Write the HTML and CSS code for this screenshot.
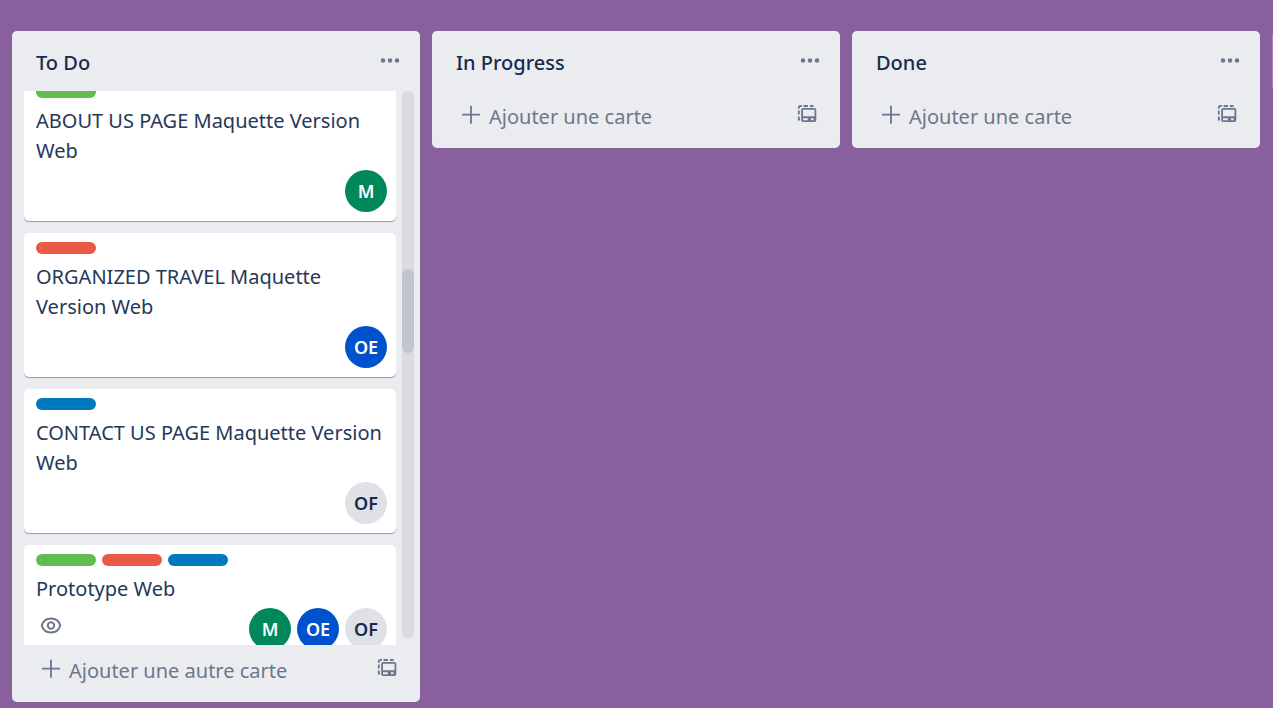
FILE: index.html
```
<!DOCTYPE html>
<html lang="fr">
<head>
<meta charset="utf-8">
<meta name="viewport" content="width=device-width, initial-scale=1">
<title>Board</title>
<link rel="stylesheet" href="styles.css">
</head>
<body>
<svg class="sprite" aria-hidden="true">
  <symbol id="icon-dots" viewBox="0 0 20 20"><circle cx="3" cy="9.500" r="2.200"/><circle cx="10" cy="9.500" r="2.200"/><circle cx="17" cy="9.500" r="2.200"/></symbol>
  <symbol id="icon-plus" viewBox="0 0 20 20"><path d="M10 1.500v16.400M1.800 9.700h16.400" fill="none" stroke="currentColor" stroke-width="1.800" stroke-linecap="round"/></symbol>
  <symbol id="icon-template" viewBox="0 0 20 20">
    <path d="M1.800 4.800V3.500Q1.800 2 3.300 2H4.800M6.500 2H11M13 2H16.500M1.800 6.500V10.500M1.800 12.500V15.500H3" fill="none" stroke="currentColor" stroke-width="1.800"/>
    <path fill-rule="evenodd" d="M6 4H17.500a1.800 1.800 0 0 1 1.800 1.800V16.200a1.800 1.800 0 0 1-1.800 1.800H6a1.800 1.800 0 0 1-1.800-1.800V5.800A1.800 1.800 0 0 1 6 4ZM6 5.800V12.300H17.500V5.800ZM6 14.300V16.200H10.800V14.300ZM14 14.300V16.200H16.500V14.300Z"/>
  </symbol>
  <symbol id="icon-eye" viewBox="0 0 22 18"><g fill="none" stroke="currentColor" stroke-width="2"><path d="M1.800 9.500C3 5 6.500 2.500 11 2.500s8 2.500 9.200 7c-1.200 4.500-4.700 7-9.200 7s-8-2.500-9.200-7Z"/><circle cx="11" cy="9.500" r="3.200"/></g></symbol>
</svg>
<main class="board">
  <section class="list">
    <header class="list-header">
      <h2 class="list-title">To Do</h2>
      <button class="icon-button" type="button" aria-label="Menu To Do"><svg class="icon"><use href="#icon-dots"/></svg></button>
    </header>
    <div class="list-body">
      <div class="list-viewport">
        <div class="cards">
          <article class="card">
            <div class="labels"><span class="label green"></span></div>
            <h3 class="card-title">ABOUT US PAGE Maquette Version Web</h3>
            <div class="card-footer"><div class="members"><span class="avatar teal">M</span></div></div>
          </article>
          <article class="card">
            <div class="labels"><span class="label red"></span></div>
            <h3 class="card-title">ORGANIZED TRAVEL Maquette Version Web</h3>
            <div class="card-footer"><div class="members"><span class="avatar royal">OE</span></div></div>
          </article>
          <article class="card">
            <div class="labels"><span class="label blue"></span></div>
            <h3 class="card-title">CONTACT US PAGE Maquette Version Web</h3>
            <div class="card-footer"><div class="members"><span class="avatar gray">OF</span></div></div>
          </article>
          <article class="card">
            <div class="labels"><span class="label green"></span><span class="label red"></span><span class="label blue"></span></div>
            <h3 class="card-title">Prototype Web</h3>
            <div class="card-footer">
              <svg class="watch"><use href="#icon-eye"/></svg>
              <div class="members"><span class="avatar teal">M</span><span class="avatar royal">OE</span><span class="avatar gray">OF</span></div>
            </div>
          </article>
        </div>
      </div>
      <div class="scrollbar"><div class="scroll-thumb"></div></div>
    </div>
    <footer class="list-footer">
      <button class="add-card" type="button"><svg class="icon"><use href="#icon-plus"/></svg><span>Ajouter une autre carte</span></button>
      <button class="icon-button" type="button" aria-label="Modèle de carte"><svg class="icon"><use href="#icon-template"/></svg></button>
    </footer>
  </section>
  <section class="list">
    <header class="list-header">
      <h2 class="list-title">In Progress</h2>
      <button class="icon-button" type="button" aria-label="Menu In Progress"><svg class="icon"><use href="#icon-dots"/></svg></button>
    </header>
    <footer class="list-footer">
      <button class="add-card" type="button"><svg class="icon"><use href="#icon-plus"/></svg><span>Ajouter une carte</span></button>
      <button class="icon-button" type="button" aria-label="Modèle de carte"><svg class="icon"><use href="#icon-template"/></svg></button>
    </footer>
  </section>
  <section class="list">
    <header class="list-header">
      <h2 class="list-title">Done</h2>
      <button class="icon-button" type="button" aria-label="Menu Done"><svg class="icon"><use href="#icon-dots"/></svg></button>
    </header>
    <footer class="list-footer">
      <button class="add-card" type="button"><svg class="icon"><use href="#icon-plus"/></svg><span>Ajouter une carte</span></button>
      <button class="icon-button" type="button" aria-label="Modèle de carte"><svg class="icon"><use href="#icon-template"/></svg></button>
    </footer>
  </section>
  <div class="add-list"></div>
</main>
</body>
</html>
```
FILE: styles.css
```
* {
  box-sizing: border-box;
}

body {
  margin: 0;
  background: #89609e;
  color: #172b4d;
  font-family: "Segoe UI", "Noto Sans", "Open Sans", sans-serif;
  font-size: 20px;
  line-height: 30px;
}

button {
  padding: 0;
  border: 0;
  background: none;
  color: inherit;
  font: inherit;
  cursor: pointer;
}

.sprite {
  display: none;
}

.icon {
  flex: none;
  display: block;
  width: 20px;
  height: 20px;
  fill: currentColor;
}

.board {
  display: flex;
  align-items: flex-start;
  gap: 12px;
  height: 100vh;
  padding: 31px 12px 6px;
  overflow: hidden;
}

.list {
  flex: none;
  display: flex;
  flex-direction: column;
  width: 408px;
  max-height: 100%;
  border-radius: 5px;
  background: #ebecf0;
}

.list-header {
  flex: none;
  display: flex;
  justify-content: space-between;
  height: 60px;
  padding: 16px 20px 0 24px;
}

.list-title {
  margin: 0;
  font-size: 20px;
  font-weight: 500;
  line-height: 32px;
}

.icon-button {
  display: flex;
  height: 28px;
  align-items: center;
  color: #6b778c;
}

.list-body {
  display: flex;
  gap: 6px;
  min-height: 0;
  padding: 0 6px 0 12px;
}

.list-viewport {
  flex: 1;
  display: flex;
  flex-direction: column;
  overflow: hidden;
}

.cards {
  display: flex;
  flex-direction: column;
  gap: 12px;
  margin-top: -14px;
}

.card {
  padding: 9px 9px 9px 12px;
  border-radius: 5px;
  background: #fff;
  box-shadow: 0 1px 1px #091e4260;
}

.labels {
  display: flex;
  gap: 6px;
  margin-bottom: 8px;
}

.label {
  width: 60px;
  height: 12px;
  border-radius: 6px;
}

.green {
  background: #61bd4f;
}

.red {
  background: #eb5a46;
}

.blue {
  background: #0079bf;
}

.card-title {
  margin: 0 0 4px;
  color: #253858;
  font-size: 20px;
  font-weight: 400;
}

.card-footer {
  display: flex;
}

.watch {
  width: 22px;
  height: 18px;
  margin: 8px 4px;
  color: #6b778c;
}

.members {
  display: flex;
  gap: 6px;
  margin-left: auto;
}

.avatar {
  width: 42px;
  height: 42px;
  border-radius: 50%;
  color: #fff;
  font-size: 18px;
  font-weight: 600;
  line-height: 42px;
  text-align: center;
}

.teal {
  background: #00875a;
}

.royal {
  background: #0052cc;
}

.gray {
  background: #dfe1e6;
  color: #172b4d;
}

.scrollbar {
  width: 12px;
  margin-bottom: 6px;
  padding-top: 178px;
  border-radius: 6px;
  background: #dadbe2;
}

.scroll-thumb {
  height: 84px;
  border-radius: 6px;
  background: #bfc4ce;
}

.list-footer {
  flex: none;
  display: flex;
  justify-content: space-between;
  height: 57px;
  padding: 9px 23px 0 29px;
  color: #6b778c;
}

.add-card {
  display: flex;
  gap: 8px;
  height: 32px;
  line-height: 34px;
}

.add-card .icon {
  margin-top: 5px;
}

.add-list {
  flex: none;
  width: 408px;
  height: 60px;
  border-radius: 5px;
  background: #ffffff3d;
}
```
